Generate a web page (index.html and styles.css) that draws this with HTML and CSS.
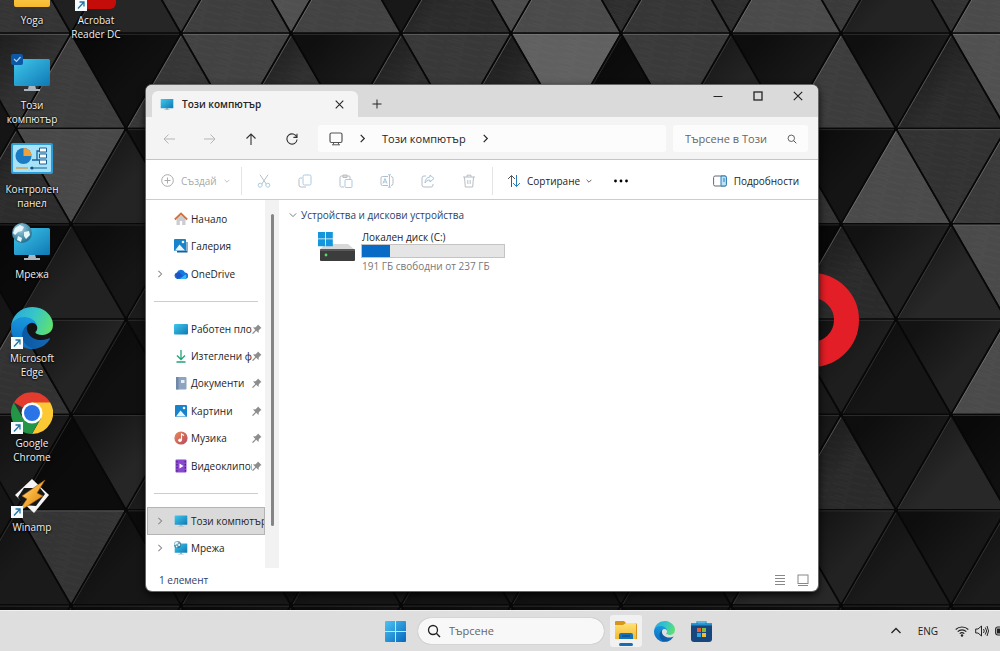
FILE: index.html
```html
<!DOCTYPE html>
<html lang="bg">
<head>
<meta charset="utf-8">
<meta name="viewport" content="width=device-width, initial-scale=1">
<title>Този компютър</title>
<link rel="stylesheet" href="styles.css">
</head>
<body>
<svg class="defs" aria-hidden="true">
  <defs>
    <linearGradient id="g-screen" x1="0" y1="0" x2="1" y2="1"><stop offset="0" stop-color="#3fc8ec"/><stop offset="1" stop-color="#0f78b4"/></linearGradient>
    <linearGradient id="g-edge1" x1="0.2" y1="0.5" x2="1" y2="0.5"><stop offset="0" stop-color="#0c59a4"/><stop offset="1" stop-color="#1669b4"/></linearGradient>
    <linearGradient id="g-edge2" x1="0.6" y1="0" x2="0.3" y2="1"><stop offset="0" stop-color="#1b9de2"/><stop offset="1" stop-color="#0a6cc0"/></linearGradient>
    <linearGradient id="g-edge3" x1="0" y1="0.3" x2="1" y2="0.6"><stop offset="0" stop-color="#2aa9d9"/><stop offset="0.5" stop-color="#36c6c8"/><stop offset="1" stop-color="#5fe070"/></linearGradient>
    <linearGradient id="g-win" x1="0" y1="0" x2="1" y2="1"><stop offset="0" stop-color="#4cc4f4"/><stop offset="1" stop-color="#0766bd"/></linearGradient>
    <linearGradient id="g-folder" x1="0" y1="0" x2="0" y2="1"><stop offset="0" stop-color="#ffe27a"/><stop offset="1" stop-color="#f6b92c"/></linearGradient>
    <linearGradient id="g-bolt" x1="0" y1="0" x2="1" y2="1"><stop offset="0" stop-color="#fff0b0"/><stop offset="0.5" stop-color="#f5ac35"/><stop offset="1" stop-color="#c97712"/></linearGradient>
    <linearGradient id="g-music" x1="0" y1="0" x2="1" y2="1"><stop offset="0" stop-color="#e98a5a"/><stop offset="1" stop-color="#b9475e"/></linearGradient>
    <radialGradient id="g-globe" cx="0.4" cy="0.3" r="0.7"><stop offset="0" stop-color="#9fd0e2"/><stop offset="1" stop-color="#24708f"/></radialGradient>
  </defs>
  <symbol id="i-monitor" viewBox="0 0 40 34"><path d="M17 27h6l1 4h4v2H12v-2h4z" fill="#a9b6bf"/><rect x="2" y="1" width="36" height="27" rx="1.500" fill="url(#g-screen)"/></symbol>
  <symbol id="i-globe" viewBox="0 0 20 20"><circle cx="10" cy="10" r="10" fill="url(#g-globe)"/><path d="M3 5l5-3 4 2-2 4-4 1-3 3-2-2zM12 9l5-1 1 4-4 4-2-3zM6 13l4 2-1 4-4-2z" fill="#e8f5f9"/></symbol>
  <symbol id="i-edge" viewBox="0 0 256 256">
    <path fill="url(#g-edge1)" d="M231 190.500c-3.400 1.800-6.900 3.400-10.500 4.700a101 101 0 0 1-35.900 6.500c-47.300 0-88.500-32.500-88.500-74.300a31.500 31.500 0 0 1 16.400-27.300c-42.800 1.800-53.800 46.400-53.800 72.500 0 74 68.100 81.400 82.800 81.400 7.900 0 19.800-2.300 27-4.600l1.300-.4a128 128 0 0 0 66.600-52.800 4 4 0 0 0-5.400-5.700z"/>
    <path fill="url(#g-edge2)" d="M105.700 241.400a79 79 0 0 1-22.700-21.300 80.700 80.700 0 0 1 29.500-120c3.200-1.500 8.500-4.100 15.600-4a32.400 32.400 0 0 1 25.700 13 31.900 31.900 0 0 1 6.300 18.700c0-.2 24.500-79.600-80-79.600-43.900 0-80 41.700-80 78.200a130 130 0 0 0 12.100 56 128 128 0 0 0 156.400 67 75.500 75.500 0 0 1-62.800-8z"/>
    <path fill="url(#g-edge3)" d="M152.300 148.900c-.9 1-3.400 2.500-3.400 5.600 0 2.600 1.700 5.200 4.800 7.300 14.300 10 41.400 8.600 41.500 8.600a59.600 59.600 0 0 0 30.300-8.300 61.400 61.400 0 0 0 30.400-52.900c.3-22.400-8-37.300-11.300-43.900C223.500 23.900 177.700 0 128 0A128 128 0 0 0 0 126.200c.5-36.500 36.800-66 80-66 3.500 0 23.500.3 42 10a72.600 72.600 0 0 1 30.900 29.300c6.100 10.600 7.200 24.100 7.200 29.500s-2.700 13.300-7.800 19.900z"/>
  </symbol>
  <symbol id="i-shortcut" viewBox="0 0 12 12"><rect width="12" height="12" fill="#f7fbfd"/><path d="M3 9.500L8.500 3.500M4.500 3H9v4.500" fill="none" stroke="#2474a5" stroke-width="1.300"/></symbol>
  <symbol id="i-right" viewBox="0 0 10 10"><path d="M3 1l4 4-4 4" fill="none" stroke="currentColor" stroke-width="1.300"/></symbol>
  <symbol id="i-down" viewBox="0 0 10 10"><path d="M1 3l4 4 4-4" fill="none" stroke="currentColor" stroke-width="1.200"/></symbol>
  <symbol id="i-close" viewBox="0 0 10 10"><path d="M.8.8l8.400 8.400M9.200.8L.8 9.200" fill="none" stroke="currentColor" stroke-width="1.200"/></symbol>
  <symbol id="i-search" viewBox="0 0 14 14"><circle cx="6" cy="6" r="4.500" fill="none" stroke="currentColor" stroke-width="1.300"/><path d="M9.300 9.300L13 13" stroke="currentColor" stroke-width="1.400"/></symbol>
  <symbol id="i-pin" viewBox="0 0 10 10"><path d="M6 .5l3.500 3.500-1 .6-1.700 1.700L6.500 9 4.200 6.700 1 10 0 9.200l3.300-3.300L1 3.600l2.600-.3 1.800-1.700z" fill="#8d8d8d"/></symbol>
  <symbol id="i-picture" viewBox="0 0 14 14"><rect x="1" y="1" width="12" height="12" rx="1" fill="#1683ca"/><path d="M2 12.500l4.500-6 5.500 6z" fill="#e8f6fc"/><circle cx="10" cy="4" r="1.300" fill="#fff"/></symbol>
</svg>

<main class="desktop">
  <svg class="wallpaper" id="wallpaper" viewBox="0 0 1000 651" preserveAspectRatio="xMinYMin slice" aria-hidden="true"></svg>

  <div class="shortcuts">
    <button class="shortcut"><svg class="pic" viewBox="0 0 42 42"><path d="M3 10h14l4 4h18v22a2 2 0 0 1-2 2H5a2 2 0 0 1-2-2z" fill="url(#g-folder)"/></svg><span>Yoga</span></button>
    <button class="shortcut"><svg class="pic" viewBox="0 0 42 42"><rect x="3" y="2" width="38" height="38" rx="6" fill="#c40d08"/><use href="#i-shortcut" x="0" y="30" width="12" height="12"/></svg><span>Acrobat Reader DC</span></button>
    <button class="shortcut"><svg class="pic" viewBox="0 0 42 42"><use href="#i-monitor" x="1" y="4" width="40" height="34"/><rect x="0" y="0" width="12" height="11" rx="2" fill="#0c58a4"/><path d="M3 5l2.500 2.500L9.500 3" fill="none" stroke="#a8d2f5" stroke-width="1.200"/></svg><span>Този компютър</span></button>
    <button class="shortcut"><svg class="pic" viewBox="0 0 42 42"><rect x="0" y="5" width="42" height="31" rx="2" fill="#2d9bd4"/><rect x="2" y="7" width="38" height="27" rx="1" fill="#a6e2f8"/><circle cx="12.500" cy="18" r="8" fill="#1b7cc4"/><path d="M12.500 18v-8a8 8 0 0 1 8 8z" fill="#f2a03a"/><path d="M21 22h5v-9h3M26 22h3" fill="none" stroke="#1c5f94" stroke-width="1.300"/><path d="M28.500 10h7v4h-7zM28.500 16h7v4h-7zM28.500 22h7v4h-7z" fill="#fff" stroke="#1c5f94"/><path d="M5 30h12" stroke="#d79a45" stroke-width="1.400"/><path d="M19 30h17" stroke="#1c5f94"/><circle cx="21" cy="30" r="1.500" fill="#174f80"/></svg><span>Контролен панел</span></button>
    <button class="shortcut"><svg class="pic" viewBox="0 0 42 42"><use href="#i-monitor" x="1" y="4" width="40" height="34"/><use href="#i-globe" x="1" y="0" width="20" height="20"/></svg><span>Мрежа</span></button>
    <button class="shortcut"><svg class="pic" viewBox="0 0 42 42"><use href="#i-edge" x="0" y="0" width="42" height="42"/><use href="#i-shortcut" x="0" y="30" width="12" height="12"/></svg><span>Microsoft Edge</span></button>
    <button class="shortcut"><svg class="pic" viewBox="0 0 42 42"><path d="M21 21L3 10.500A21 21 0 0 1 39.200 10.500z" fill="#e33b2e"/><path d="M21 10.500h18.200A21 21 0 0 1 21 42L30 26z" fill="#fcc934"/><path d="M2.800 10.500L12 26.200 21 31l9-5-9.200 16A21 21 0 0 1 2.800 10.500z" fill="#229547"/><circle cx="21" cy="21" r="10.500" fill="#fff"/><circle cx="21" cy="21" r="8" fill="#2b74e8"/><use href="#i-shortcut" x="0" y="30" width="12" height="12"/></svg><span>Google Chrome</span></button>
    <button class="shortcut"><svg class="pic" viewBox="0 0 42 42"><path d="M21 3l17 16-15 18L4 19z" fill="#f5f5f5"/><path d="M13 12h16l5 6-9 12-13-1-5-8z" fill="#171717"/><path d="M34 4L11 20l5 3-9 13 25-16-6-3z" fill="url(#g-bolt)" stroke="#a35f0a" stroke-width=".6"/><use href="#i-shortcut" x="0" y="30" width="12" height="12"/></svg><span>Winamp</span></button>
  </div>

  <section class="window" aria-label="Този компютър">
    <header class="titlebar">
      <div class="tab"><svg class="ic16" viewBox="0 0 40 34"><use href="#i-monitor"/></svg><span class="tab-title">Този компютър</span><button class="bare" aria-label="Затваряне на раздела"><svg class="ic9"><use href="#i-close"/></svg></button></div>
      <button class="bare new-tab" aria-label="Нов раздел"><svg class="ic10" viewBox="0 0 10 10"><path d="M5 .5v9M.5 5h9" stroke="currentColor"/></svg></button>
      <div class="window-controls">
        <button class="bare" aria-label="Минимизиране"><svg class="ic10" viewBox="0 0 10 10"><path d="M.5 5.500h9" stroke="currentColor"/></svg></button>
        <button class="bare" aria-label="Максимизиране"><svg class="ic10" viewBox="0 0 10 10"><rect x="1" y="1" width="8" height="8" fill="none" stroke="currentColor" stroke-width="1.300"/></svg></button>
        <button class="bare" aria-label="Затваряне"><svg class="ic10"><use href="#i-close"/></svg></button>
      </div>
    </header>

    <div class="navbar">
      <div class="nav-buttons">
        <button class="bare" disabled aria-label="Назад"><svg class="ic12" viewBox="0 0 12 12"><path d="M12 6H1M5.500 1.500L1 6l4.500 4.500" fill="none" stroke="currentColor"/></svg></button>
        <button class="bare" disabled aria-label="Напред"><svg class="ic12" viewBox="0 0 12 12"><path d="M0 6h11M6.500 1.500L11 6l-4.500 4.500" fill="none" stroke="currentColor"/></svg></button>
        <button class="bare" aria-label="Нагоре"><svg class="ic12" viewBox="0 0 12 12"><path d="M6 12V1M1.500 5.500L6 1l4.500 4.500" fill="none" stroke="currentColor" stroke-width="1.100"/></svg></button>
        <button class="bare" aria-label="Обновяване"><svg class="ic12" viewBox="0 0 12 12"><path d="M10.800 4.200A5.100 5.100 0 1 0 11.100 6.500M11 .8v3.600H7.400" fill="none" stroke="currentColor" stroke-width="1.100"/></svg></button>
      </div>
      <nav class="address" aria-label="Път">
        <svg class="ic14" viewBox="0 0 14 14"><rect x="1" y="1" width="12" height="9.500" rx="1.500" fill="none" stroke="#555" stroke-width="1.200"/><path d="M4.500 10.500v2M9.500 10.500v2M3 12.800h8" stroke="#555"/></svg>
        <svg class="ic9"><use href="#i-right"/></svg>
        <button class="bare crumb">Този компютър</button>
        <svg class="ic9"><use href="#i-right"/></svg>
      </nav>
      <label class="find"><input type="text" placeholder="Търсене в Този" aria-label="Търсене в Този компютър"><svg class="ic10"><use href="#i-search"/></svg></label>
    </div>

    <div class="commands">
      <button class="bare command create" disabled><svg class="ic13" viewBox="0 0 13 13"><circle cx="6.500" cy="6.500" r="5.800" fill="none" stroke="currentColor"/><path d="M6.500 3.500v6M3.500 6.500h6" stroke="currentColor"/></svg>Създай<svg class="ic6"><use href="#i-down"/></svg></button>
      <div class="edit-tools">
        <button class="bare" disabled aria-label="Изрязване"><svg class="ic14" viewBox="0 0 14 14"><path d="M3 .8l6.500 9.500M11 .8L4.500 10.300" fill="none" stroke="#b6bec5"/><circle cx="3.200" cy="11.200" r="2" fill="none" stroke="#a9cbe2"/><circle cx="10.800" cy="11.200" r="2" fill="none" stroke="#a9cbe2"/></svg></button>
        <button class="bare" disabled aria-label="Копиране"><svg class="ic14" viewBox="0 0 14 14"><rect x="5" y="1" width="8" height="10" rx="1.500" fill="none" stroke="#a9cbe2"/><path d="M4 4H2.500A1.500 1.500 0 0 0 1 5.500V11a2 2 0 0 0 2 2h5" fill="none" stroke="#b6bec5"/></svg></button>
        <button class="bare" disabled aria-label="Поставяне"><svg class="ic14" viewBox="0 0 14 14"><path d="M5 13H2.500A1.500 1.500 0 0 1 1 11.500v-8A1.500 1.500 0 0 1 2.500 2H10a1 1 0 0 1 1 1v2M4 1h4v2.500H4z" fill="none" stroke="#b6bec5"/><rect x="6" y="5.500" width="7" height="8" rx="1" fill="none" stroke="#a9cbe2"/></svg></button>
        <button class="bare" disabled aria-label="Преименуване"><svg class="ic14" viewBox="0 0 14 14"><path d="M8 2.500H2.500A1.500 1.500 0 0 0 1 4v6a1.500 1.500 0 0 0 1.500 1.500H8M11 2.500a2 2 0 0 1 2 2v5a2 2 0 0 1-2 2" fill="none" stroke="#b6bec5"/><path d="M9.500 1v12M8 .8h3M8 13.200h3M3 9.500l2-5 2 5M3.700 8h2.600" fill="none" stroke="#a2c6e0"/></svg></button>
        <button class="bare" disabled aria-label="Споделяне"><svg class="ic14" viewBox="0 0 14 14"><path d="M5 2H3a2 2 0 0 0-2 2v7a2 2 0 0 0 2 2h7a2 2 0 0 0 2-2v-1" fill="none" stroke="#b6bec5"/><path d="M9 1l4 3.500L9 8V6C6.500 6 5 7 4 9c0-3.500 2-5.800 5-6z" fill="none" stroke="#a2c6e0"/></svg></button>
        <button class="bare" disabled aria-label="Изтриване"><svg class="ic14" viewBox="0 0 14 14"><path d="M1 3h12M5 3V1.200h4V3M2.500 3l.8 10h7.400l.8-10M5.800 6v4M8.200 6v4" fill="none" stroke="#b6bec5"/></svg></button>
      </div>
      <button class="bare command sort"><svg class="ic14" viewBox="0 0 14 14"><path d="M4.500 13V1.500M1 5l3.500-3.500L8 5" fill="none" stroke="#555"/><path d="M9.500 1v11.500M6 9l3.500 3.500L13 9" fill="none" stroke="#287fb8"/></svg>Сортиране<svg class="ic6"><use href="#i-down"/></svg></button>
      <button class="bare more" aria-label="Още"><svg class="ic14" viewBox="0 0 14 14"><circle cx="1.500" cy="7" r="1.400"/><circle cx="7" cy="7" r="1.400"/><circle cx="12.500" cy="7" r="1.400"/></svg></button>
      <button class="bare command details"><svg class="ic14" viewBox="0 0 14 14"><rect x=".6" y="2" width="12.800" height="10" rx="1.500" fill="#fff" stroke="#667"/><path d="M8 2h4a1.500 1.500 0 0 1 1.400 1.500v7A1.500 1.500 0 0 1 12 12H8z" fill="#bfe2f7" stroke="#287fb8"/><path d="M10 5h2M10 7h2" stroke="#287fb8"/></svg>Подробности</button>
    </div>

    <div class="body">
      <nav class="sidebar" aria-label="Навигация">
        <a class="place" href="#"><span class="twist"></span><svg class="ic14" viewBox="0 0 14 14"><path d="M2.500 7v6h3.300V9h2.400v4h3.300V7L7 3z" fill="#c9ccd1"/><path d="M.8 7.500L7 1.500l6.200 6" fill="none" stroke="#d2733f" stroke-width="1.800"/></svg><span class="name">Начало</span></a>
        <a class="place" href="#"><span class="twist"></span><svg class="ic14" viewBox="0 0 14 14"><path d="M3 3h10.500v10.500H3z" fill="#1b5e95"/><path d="M12 1v11" stroke="#fff"/><use href="#i-picture" x="-1" y="-1" width="14" height="14"/></svg><span class="name">Галерия</span></a>
        <a class="place" href="#"><span class="twist"><svg class="ic8"><use href="#i-right"/></svg></span><svg class="ic14" viewBox="0 0 14 14"><path d="M3.500 12A3.400 3.400 0 0 1 2.800 5.400 4.500 4.500 0 0 1 11 5.600 3.200 3.200 0 0 1 11 12z" fill="#1477e0"/><path d="M6 12l5.500-4.500A3 3 0 0 1 11 12z" fill="#38b7f2"/><path d="M1 7l4-2 4 4-6 3z" fill="#1d55c8"/></svg><span class="name">OneDrive</span></a>
        <hr>
        <a class="place" href="#"><span class="twist"></span><svg class="ic14" viewBox="0 0 14 14"><rect y="2" width="14" height="10.500" rx="1" fill="url(#g-screen)"/></svg><span class="name">Работен плот</span><svg class="ic10"><use href="#i-pin"/></svg></a>
        <a class="place" href="#"><span class="twist"></span><svg class="ic14" viewBox="0 0 14 14"><path d="M7 1v9.500M3 6.500l4 4 4-4M2.500 13h9" fill="none" stroke="#22a37a" stroke-width="1.300"/></svg><span class="name">Изтеглени файлове</span><svg class="ic10"><use href="#i-pin"/></svg></a>
        <a class="place" href="#"><span class="twist"></span><svg class="ic14" viewBox="0 0 14 14"><rect x="2" y="1" width="10.500" height="12.500" rx="1" fill="#8ea3bf"/><path d="M2 1h2.500v12.500H2z" fill="#6f88a8"/><path d="M7 4h3.500v3H7z" fill="#e7eef5"/></svg><span class="name">Документи</span><svg class="ic10"><use href="#i-pin"/></svg></a>
        <a class="place" href="#"><span class="twist"></span><svg class="ic14"><use href="#i-picture"/></svg><span class="name">Картини</span><svg class="ic10"><use href="#i-pin"/></svg></a>
        <a class="place" href="#"><span class="twist"></span><svg class="ic14" viewBox="0 0 14 14"><circle cx="7" cy="7" r="6.600" fill="url(#g-music)"/><path d="M7.500 9V3l2.500 1.500" fill="none" stroke="#fff" stroke-width="1.100"/><circle cx="6" cy="9.200" r="1.800" fill="#fff"/></svg><span class="name">Музика</span><svg class="ic10"><use href="#i-pin"/></svg></a>
        <a class="place" href="#"><span class="twist"></span><svg class="ic14" viewBox="0 0 14 14"><rect x="1.500" y=".5" width="11" height="13" rx="1" fill="#8a48ce"/><path d="M3 2v11M11.300 2v11" stroke="#4b2288" stroke-width="1.300" stroke-dasharray="1.500"/><path d="M5.500 4.500v5l4-2.500z" fill="#fff"/></svg><span class="name">Видеоклипове</span><svg class="ic10"><use href="#i-pin"/></svg></a>
        <hr>
        <a class="place selected" href="#" aria-current="page"><span class="twist"><svg class="ic8"><use href="#i-right"/></svg></span><svg class="ic14"><use href="#i-monitor"/></svg><span class="name">Този компютър</span></a>
        <a class="place" href="#"><span class="twist"><svg class="ic8"><use href="#i-right"/></svg></span><svg class="ic14" viewBox="0 0 14 14"><use href="#i-monitor" x="0" y="2" width="14" height="12"/><use href="#i-globe" x="0" y="0" width="7" height="7"/></svg><span class="name">Мрежа</span></a>
      </nav>
      <div class="scrollbar"><div class="thumb"></div></div>
      <section class="content">
        <h2><svg class="ic8"><use href="#i-down"/></svg>Устройства и дискови устройства</h2>
        <article class="drive">
          <svg class="drive-pic" viewBox="0 0 38 30"><path d="M8 12h22l7 6H1z" fill="#d8d8d8"/><rect x="2" y="17" width="35" height="12" rx="1" fill="#3c3c3c"/><path d="M2 18h35" stroke="#777"/><circle cx="8" cy="23" r="1.400" fill="#4be06a"/><path d="M0 0h7v6.500H0zM7.800 0h7v6.500h-7zM0 7.300h7v7H0zM7.800 7.300h7v7h-7z" fill="#1496dc"/></svg>
          <div class="drive-info"><span class="drive-name">Локален диск (C:)</span><div class="meter" role="progressbar" aria-label="Използвано място" aria-valuenow="20"><div class="used" style="width:20%"></div></div><span class="free">191 ГБ свободни от 237 ГБ</span></div>
        </article>
      </section>
    </div>

    <footer class="status">
      <span>1 елемент</span>
      <button class="bare view" aria-label="Подробен изглед"><svg class="ic12" viewBox="0 0 12 12"><path d="M1 1.500h10M1 4.500h10M1 7.500h10M1 10.500h10" stroke="#888"/></svg></button>
      <button class="bare view" aria-label="Големи икони"><svg class="ic12" viewBox="0 0 12 12"><rect x="1" y="1" width="10" height="8.500" fill="none" stroke="#888"/><path d="M1 11.500h10" stroke="#888"/></svg></button>
    </footer>
  </section>
</main>

<footer class="taskbar">
  <div class="apps">
    <button class="bare" aria-label="Старт"><svg class="ic21" viewBox="0 0 21 21"><path d="M0 1q0-1 1-1h9v10H0zM11 0h9q1 0 1 1v9H11zM0 11h10v10H1q-1 0-1-1zM11 11h10v9q0 1-1 1h-9z" fill="url(#g-win)"/></svg></button>
    <label class="task-search"><svg class="ic14"><use href="#i-search"/></svg><input type="text" placeholder="Търсене" aria-label="Търсене"></label>
    <button class="bare explorer" aria-label="Файлове"><svg viewBox="0 0 32 32" class="ic32"><path d="M5 7q0-1 1-1h8l2 2h9q2 0 2 2v14H5z" fill="#d99518"/><path d="M5 10h8l3-2h9q1 0 1 1v15H5z" fill="url(#g-folder)"/><path d="M9 24v-4q0-2 2-2h10q2 0 2 2v4z" fill="#1673b9"/><path d="M12 21h8" stroke="#0a4f8e" stroke-width="1.500"/><rect x="9" y="28" width="14" height="3" rx="1.500" fill="#176db5"/></svg></button>
    <button class="bare" aria-label="Microsoft Edge"><svg class="ic21"><use href="#i-edge"/></svg></button>
    <button class="bare" aria-label="Microsoft Store"><svg class="ic21" viewBox="0 0 21 21"><path d="M6 3V1h9v2" fill="none" stroke="#35a7e0" stroke-width="1.500"/><path d="M0 2.500h21V18q0 3-3 3H3q-3 0-3-3z" fill="#17477d"/><path d="M0 2.500h21v2H0z" fill="#2192cf"/><path d="M6 7h4v4H6z" fill="#ef5b35"/><path d="M11 7h4v4h-4z" fill="#7fbb3c"/><path d="M6 12h4v4H6z" fill="#2ba5e5"/><path d="M11 12h4v4h-4z" fill="#f8bb2b"/></svg></button>
  </div>
  <div class="tray">
    <button class="bare" aria-label="Скрити икони"><svg class="ic10" viewBox="0 0 10 10"><path d="M.5 7L5 2.500 9.500 7" fill="none" stroke="currentColor" stroke-width="1.300"/></svg></button>
    <button class="bare lang">ENG</button>
    <button class="bare system" aria-label="Мрежа, звук и батерия">
      <svg class="ic14" viewBox="0 0 14 14"><path d="M.7 5.500a9 9 0 0 1 12.600 0M2.700 7.700a6 6 0 0 1 8.600 0M4.700 9.700a3.300 3.300 0 0 1 4.600 0" fill="none" stroke="currentColor" stroke-width="1.100"/><circle cx="7" cy="11.500" r="1.200" fill="currentColor"/></svg>
      <svg class="ic14" viewBox="0 0 14 14"><path d="M.7 5H3l3.500-3v10L3 9H.7zM8.500 5q1.500 2 0 4M10.300 3.500q2.600 3.500 0 7M12 2q3 5 0 10" fill="none" stroke="currentColor"/></svg>
      <svg class="ic14" viewBox="0 0 14 14"><rect x=".7" y="3" width="13" height="8" rx="2" fill="none" stroke="currentColor" stroke-width="1.200"/><rect x="2" y="4.500" width="10" height="5" fill="currentColor"/></svg>
    </button>
  </div>
</footer>
<script src="wallpaper.js"></script>
</body>
</html>
```

FILE: styles.css
```css
* { box-sizing: border-box; }
html, body { height: 100%; }
body {
  margin: 0;
  display: flex;
  flex-direction: column;
  overflow: hidden;
  background: #151515;
  color: #242424;
  font: 10px/14px "Open Sans", "Noto Sans", sans-serif;
}
button, input { font: inherit; color: inherit; }
svg { display: block; flex: none; }
.defs { position: absolute; width: 0; height: 0; }

.ic6 { width: 6px; height: 6px; }
.ic8 { width: 8px; height: 8px; }
.ic9 { width: 9px; height: 9px; }
.ic10 { width: 10px; height: 10px; }
.ic12 { width: 12px; height: 12px; }
.ic13 { width: 13px; height: 13px; }
.ic14 { width: 14px; height: 14px; }
.ic16 { width: 14px; height: 13px; }
.ic21 { width: 21px; height: 21px; }
.ic32 { width: 32px; height: 32px; }

.bare {
  display: flex;
  align-items: center;
  justify-content: center;
  padding: 0;
  border: 0;
  background: none;
}

/* Desktop */
.desktop { position: relative; flex: 1; min-height: 0; overflow: hidden; }
.wallpaper { position: absolute; inset: 0; width: 100%; height: 651px; }
.shortcuts {
  position: absolute;
  top: -33px;
  left: 0;
  width: 128px;
  height: 592px;
  display: grid;
  grid-template-columns: 1fr 1fr;
  grid-template-rows: repeat(7, 1fr);
}
.shortcut {
  display: flex;
  flex-direction: column;
  align-items: center;
  gap: 2px;
  padding: 2px 3px 0;
  border: 0;
  background: none;
  color: #f2f2f2;
  text-shadow: 0 1px 2px #000, 0 0 2px #000;
}
.shortcut:nth-child(n+3) { grid-column: 1; }
.pic { width: 42px; height: 42px; }

/* Explorer window */
.window {
  position: absolute;
  top: 85px;
  right: 18.2%;
  bottom: 19px;
  left: 14.6%;
  display: flex;
  flex-direction: column;
  overflow: hidden;
  border-radius: 6px;
  background: #fff;
  box-shadow: 0 0 0 1px #666, 0 3px 9px #000;
}
.titlebar { display: flex; height: 32px; padding: 6px 0 0 6px; background: #dadada; }
.tab {
  display: flex;
  align-items: center;
  width: 206px;
  padding: 0 14px 0 8px;
  border-radius: 6px 6px 0 0;
  background: #f4f4f4;
}
.tab-title { flex: 1; padding-left: 8px; font-weight: 600; }
.new-tab { width: 38px; }
.window-controls { display: flex; align-items: flex-start; gap: 30px; margin-left: auto; padding-right: 15px; }

.navbar { display: flex; gap: 7px; height: 43px; padding: 8px 10px 7px 0; border-bottom: 1px solid #c4c4c4; background: #f4f4f4; }
.nav-buttons { display: flex; gap: 29px; width: 165px; padding-left: 17px; color: #333; }
.nav-buttons :disabled { color: #b5b5b5; }
.address { flex: 1; display: flex; align-items: center; gap: 15px; padding-left: 11px; border-radius: 3px; background: #fcfcfc; font-size: 11px; }
.find { display: flex; align-items: center; width: 135px; padding: 0 11px 0 12px; border-radius: 3px; background: #fcfcfc; color: #555; font-size: 11px; }
.find input, .task-search input { flex: 1; width: 0; min-width: 0; padding: 0; border: 0; outline: 0; background: none; }
input::placeholder { color: #666; opacity: 1; }

.commands { display: flex; align-items: center; height: 40px; padding: 2px 19px 0 15px; border-bottom: 1px solid #ccc; }
.command { gap: 7px; }
.create { color: #aaa; width: 81px; height: 28px; justify-content: flex-start; border-right: 1px solid #e4e4e4; }
.edit-tools { display: flex; align-items: center; gap: 27px; width: 251px; height: 28px; padding-left: 15px; border-right: 1px solid #e4e4e4; }
.sort { margin-left: 14px; gap: 6px; }
.more { margin-left: 22px; }
.details { margin-left: auto; }

.body { display: flex; flex: 1; min-height: 0; }
.sidebar { display: grid; grid-template-columns: minmax(0, 1fr); grid-auto-rows: 1fr; width: 119px; padding: 5px 0 7px 1px; }
.sidebar hr { align-self: center; width: 104px; margin: 0 0 0 7px; border: 0; border-top: 1px solid #cdcdcd; }
.place {
  display: flex;
  align-items: center;
  padding-right: 2px;
  border: 1px solid transparent;
  color: #242424;
  text-decoration: none;
}
.place.selected { padding-right: 0; border-color: #b4b4b4; background: #dadada; }
.twist { width: 26px; padding-left: 8px; color: #888; }
.name { flex: 1; min-width: 0; padding-left: 3px; overflow: hidden; white-space: nowrap; }
.scrollbar { display: flex; justify-content: center; width: 14px; margin-bottom: 1px; padding: 14px 0 42px; background: #f2f2f2; }
.thumb { width: 3px; border-radius: 2px; background: #858585; }
.content { flex: 1; padding: 8px 10px; }
.content h2 { display: flex; align-items: center; gap: 4px; margin: 0; color: #2d4269; font-size: 10px; font-weight: 400; }
.content h2 svg { color: #777; }
.drive { display: flex; gap: 5px; padding: 8px 0 0 29px; }
.drive-pic { width: 38px; height: 30px; margin-top: 2px; }
.drive-info { display: flex; flex-direction: column; width: 144px; }
.drive-name, .free { padding-left: 1px; white-space: nowrap; }
.meter { height: 14px; margin-bottom: 1px; border: 1px solid #c4c4c4; background: #e5e5e5; }
.used { height: 100%; background: #086bc5; }
.free { color: #777; }

.status { display: flex; align-items: center; gap: 11px; height: 22px; padding: 0 9px 0 13px; color: #2d4269; }
.status span { flex: 1; }

/* Taskbar */
.taskbar { position: relative; display: flex; align-items: center; height: 41px; padding-left: 38.5%; border-top: 1px solid #f0f0f0; background: #dedede; overflow: hidden; }
.apps { display: flex; align-items: center; gap: 12px; }
.task-search { display: flex; align-items: center; gap: 8px; width: 186px; height: 26px; padding: 0 9px; border-radius: 13px; background: #f8f8f8; box-shadow: 0 0 1px #888; font-size: 11px; color: #222; }
.explorer { margin: 0 0 0 -6px; border-radius: 3px; background: #f1f1f1; }
.apps > :last-child { margin-left: 4px; }
.tray { display: flex; align-items: center; gap: 17px; margin-left: auto; margin-right: -9px; color: #222; }
.system { gap: 6px; }
```

FILE: wallpaper.js
```javascript
// Relief of triangular tiles; each row lists tile greys from left to right.
const rows = [
  [52, 32, 38, 56, 62, 80, 66, 24, 44, 76, 74, 46, 54, 46, 74, 58, 36, 50, 74],
  [48, 60, 16, 54, 66, 48, 27, 46, 56, 42, 96, 14, 58, 36, 24, 60, 27, 44, 80],
  [44, 72, 36, 30, 30, 30, 30, 30, 30, 30, 30, 30, 30, 30, 50, 20, 74, 50, 58],
  [10, 34, 22, 30, 30, 30, 30, 30, 30, 30, 30, 30, 30, 30, 8, 42, 32, 40, 74],
  [50, 36, 16, 30, 30, 30, 30, 30, 30, 30, 30, 30, 30, 30, 26, 30, 22, 34, 74],
  [26, 12, 38, 30, 30, 30, 30, 30, 30, 30, 30, 30, 30, 30, 24, 42, 24, 40, 16],
  [26, 52, 22, 20, 24, 18, 22, 26, 20, 24, 18, 24, 20, 26, 40, 34, 27, 24, 28],
  [18, 12, 20, 14, 18, 12, 20, 14, 18, 12, 20, 14, 18, 12, 20, 14, 18, 12, 20]
];
const half = 55;
const rise = 95.3;
const top0 = -62;
let art = '<defs>' +
  '<linearGradient id="cast" x1="0" y1="0" x2="0.6" y2="0.5"><stop offset="0.3" stop-color="#000" stop-opacity=".55"/><stop offset="1" stop-color="#000" stop-opacity="0"/></linearGradient>' +
  '<pattern id="brushed" width="37" height="7" patternUnits="userSpaceOnUse" patternTransform="rotate(14)"><path d="M0 1h17M14 3h20M5 5.500h13" stroke="#fff" stroke-opacity=".04" stroke-width=".8"/></pattern></defs>';
let edges = '';
rows.forEach((greys, r) => {
  const y1 = top0 + r * rise;
  const y2 = y1 + rise;
  greys.forEach((g, i) => {
    const c = 16 + half * i;
    const up = (i + r) % 2 === 0;
    const pts = up ? `${c},${y1} ${c + half},${y2} ${c - half},${y2}` : `${c - half},${y1} ${c + half},${y1} ${c},${y2}`;
    art += `<polygon points="${pts}" fill="rgb(${g},${g},${g})"/>`;
    if (g > 40) art += `<polygon points="${pts}" fill="url(#brushed)"/>`;
    if (g < 50) art += `<polygon points="${pts}" fill="url(#cast)" opacity=".8"/>`;
    edges += `<polygon points="${pts}" fill="none" stroke="#080808" stroke-width="1.600"/>`;
    const glow = g > 40 ? 0.55 : 0.28;
    const light = up ? `M${c - half + 2} ${y2 - 1}L${c} ${y1 + 3}` : `M${c - half + 2} ${y1 + 1}H${c + half - 2}`;
    edges += `<path d="${light}" stroke="#999" stroke-opacity="${glow}" stroke-width=".8"/>`;
  });
});
art += edges + '<circle cx="812" cy="320" r="34.500" fill="none" stroke="#e41e26" stroke-width="25"/>';
document.getElementById('wallpaper').innerHTML = art;
```
